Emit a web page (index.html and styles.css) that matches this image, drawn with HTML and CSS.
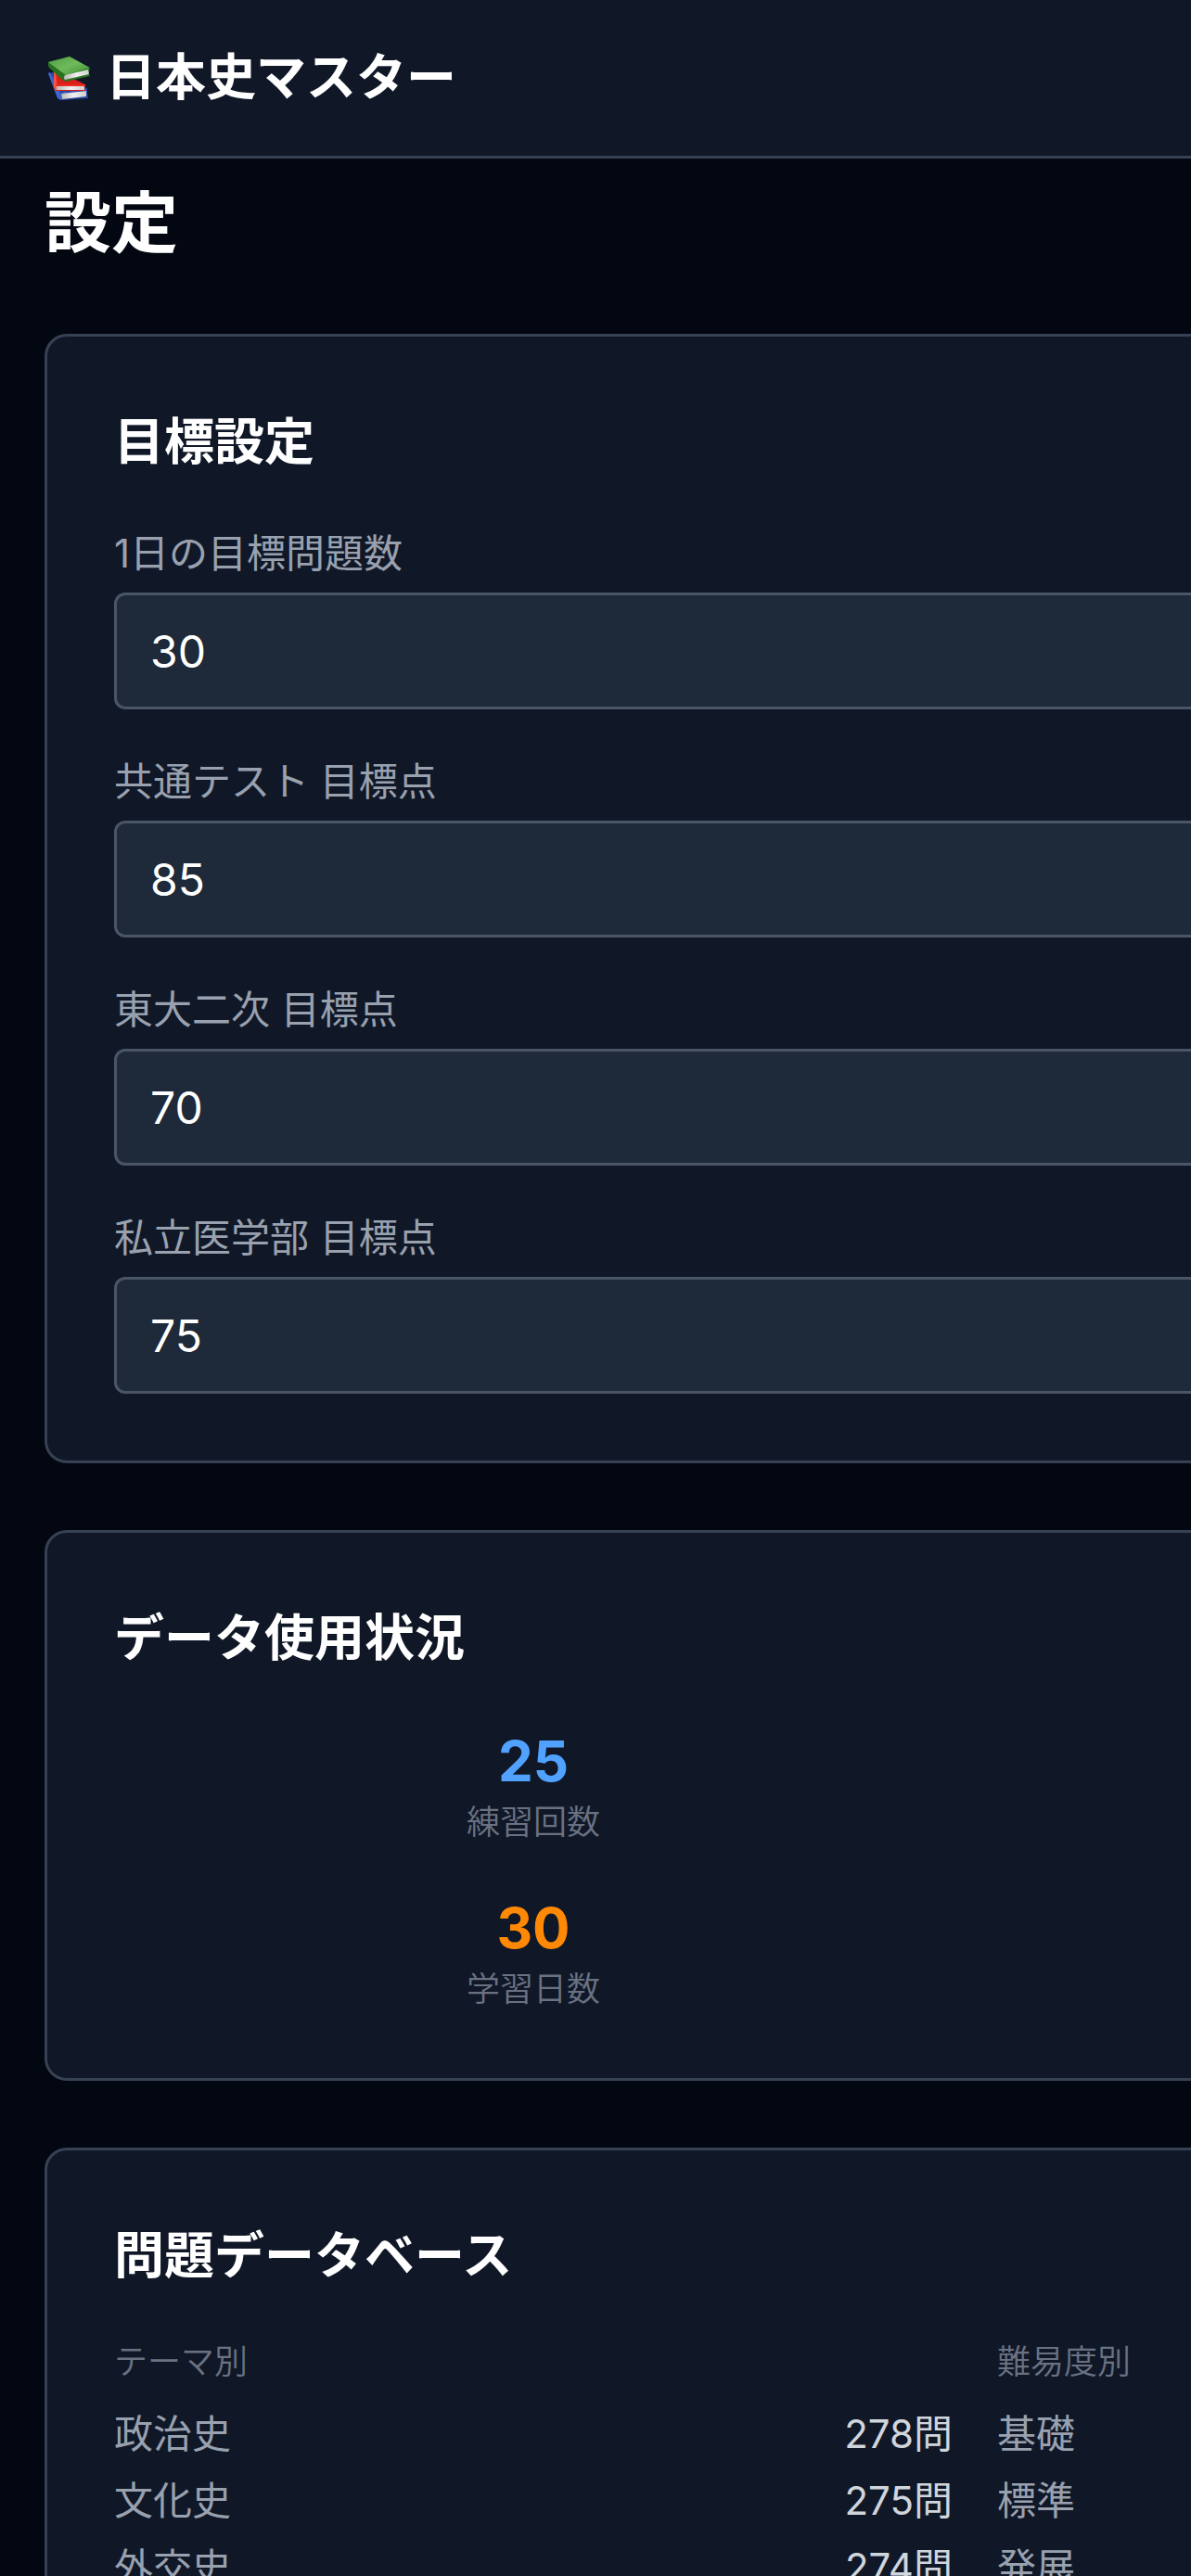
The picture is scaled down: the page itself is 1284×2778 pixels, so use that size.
FILE: index.html
```html
<!DOCTYPE html>
<html lang="ja">
<head>
<meta charset="utf-8">
<meta name="viewport" content="width=device-width, initial-scale=1">
<title>日本史マスター</title>
<link rel="stylesheet" href="styles.css">
</head>
<body>
<header class="topbar">
  <svg class="topbar-icon" viewBox="0 0 54 54" aria-hidden="true">
    <defs>
      <linearGradient id="cover-green" x1="0" y1="0" x2="1" y2="1">
        <stop offset="0" stop-color="#4f9e42"/>
        <stop offset=".5" stop-color="#70b95c"/>
        <stop offset="1" stop-color="#3d8f30"/>
      </linearGradient>
      <linearGradient id="pages" x1="0" y1="0" x2="1" y2="0">
        <stop offset="0" stop-color="#b9b9b9"/>
        <stop offset=".5" stop-color="#f0f0f0"/>
        <stop offset="1" stop-color="#cfcfcf"/>
      </linearGradient>
    </defs>
    <path d="M4 22 L9 21 L46 38 L46 41 L47 49 L18 51 L14 49 Z" fill="#2443a0"/>
    <path d="M4 22 L6 21 L19 47 L18 51 L14 49 Z" fill="#3f65c9"/>
    <path d="M18 43 L45 40 L45 47 L19 50 Z" fill="url(#pages)"/>
    <path d="M18 43 L46 39 L46 41 L18 44 Z" fill="#2d51b8"/>
    <path d="M10 20 L38 31 L45 35 L43 36 L44 41 L12 41 L10 37 Z" fill="#d91f18"/>
    <path d="M10 20 L12 21 L14 39 L12 41 L10 37 Z" fill="#f25643"/>
    <path d="M13 36 L43 35 L43 40 L13 40 Z" fill="url(#pages)"/>
    <path d="M12 34 L44 34 L44 36 L12 36 Z" fill="#ee2a20"/>
    <path d="M4 10 Q3 13 5 16 L19 29 L23 31 L49 25 L49 24 L47 23 L49 17 L27 4 Z" fill="#28721f"/>
    <path d="M4 10 L27 4 L49 16 L23 24 Z" fill="url(#cover-green)"/>
    <path d="M22 24 L47 18 L48 23 L22 29 Q20 27 22 24 Z" fill="url(#pages)"/>
  </svg>
  <span class="topbar-title">日本史マスター</span>
</header>

<main class="page">
  <h1 class="page-title">設定</h1>

  <section class="card">
    <h2 class="card-title">目標設定</h2>
    <form class="goals">
      <div class="field">
        <label class="field-label" for="daily">1日の目標問題数</label>
        <input class="field-input" id="daily" type="number" value="30">
      </div>
      <div class="field">
        <label class="field-label" for="common">共通テスト 目標点</label>
        <input class="field-input" id="common" type="number" value="85">
      </div>
      <div class="field">
        <label class="field-label" for="todai">東大二次 目標点</label>
        <input class="field-input" id="todai" type="number" value="70">
      </div>
      <div class="field">
        <label class="field-label" for="medical">私立医学部 目標点</label>
        <input class="field-input" id="medical" type="number" value="75">
      </div>
    </form>
  </section>

  <section class="card">
    <h2 class="card-title">データ使用状況</h2>
    <div class="columns columns-stats">
      <div class="stat">
        <div class="stat-value stat-blue">25</div>
        <div class="stat-label">練習回数</div>
      </div>
      <div class="stat">
        <div class="stat-value stat-orange">30</div>
        <div class="stat-label">学習日数</div>
      </div>
    </div>
  </section>

  <section class="card">
    <h2 class="card-title">問題データベース</h2>
    <div class="columns">
      <div>
        <h3 class="group-title">テーマ別</h3>
        <dl class="counts">
          <div class="count"><dt>政治史</dt><dd>278問</dd></div>
          <div class="count"><dt>文化史</dt><dd>275問</dd></div>
          <div class="count"><dt>外交史</dt><dd>274問</dd></div>
        </dl>
      </div>
      <div>
        <h3 class="group-title">難易度別</h3>
        <dl class="counts">
          <div class="count"><dt>基礎</dt></div>
          <div class="count"><dt>標準</dt></div>
          <div class="count"><dt>発展</dt></div>
        </dl>
      </div>
    </div>
  </section>
</main>
</body>
</html>
```
FILE: styles.css
```css
* {
  box-sizing: border-box;
}

body,
h1,
h2,
h3,
dl,
dd {
  margin: 0;
}

body {
  overflow-x: hidden;
  background: #030712;
  color: #fff;
  font-family: Inter, "Noto Sans CJK JP", sans-serif;
  font-size: 48px;
  line-height: 72px;
}

.topbar {
  display: flex;
  align-items: center;
  gap: 12px;
  padding: 42px 48px;
  border-bottom: 3px solid #364153;
  background: #101828;
}

.topbar-icon {
  width: 54px;
  height: 54px;
}

.topbar-title {
  font-size: 54px;
  font-weight: 700;
  line-height: 84px;
}

/* The two-column grids keep a minimum column width, so the cards
   can run past the right edge on narrow windows. */
.page {
  display: flex;
  flex-direction: column;
  gap: 72px;
  width: max-content;
  min-width: 100%;
  padding: 21px 48px 72px;
}

.page-title {
  font-size: 72px;
  font-weight: 700;
  line-height: 96px;
}

.card {
  padding: 72px;
  border: 3px solid #364153;
  border-radius: 24px;
  background: #101828;
}

.card-title {
  margin-bottom: 48px;
  font-size: 54px;
  font-weight: 700;
  line-height: 84px;
}

.goals {
  display: flex;
  flex-direction: column;
  gap: 48px;
}

.field {
  display: flex;
  flex-direction: column;
  gap: 12px;
}

.field-label {
  color: #99a1af;
  font-size: 42px;
  line-height: 60px;
}

.field-input {
  width: 100%;
  height: 126px;
  padding: 24px 36px;
  border: 3px solid #4a5565;
  border-radius: 12px;
  background: #1e2939;
  color: #fff;
  font: inherit;
  appearance: textfield;
}

.field-input::-webkit-inner-spin-button {
  display: none;
}

.columns {
  display: grid;
  grid-template-columns: repeat(2, minmax(904px, 1fr));
  gap: 48px;
}

.columns-stats .stat {
  grid-column: 1;
}

.stat {
  text-align: center;
}

.stat-value {
  font-size: 60px;
  font-weight: 700;
  line-height: 84px;
}

.stat-blue {
  color: #51a2ff;
}

.stat-orange {
  color: #ff8904;
}

.stat-label,
.group-title {
  color: #6a7282;
  font-size: 36px;
  font-weight: 350;
  line-height: 48px;
}

.group-title {
  margin-bottom: 24px;
}

.counts {
  display: flex;
  flex-direction: column;
  gap: 12px;
}

.count {
  display: flex;
  justify-content: space-between;
  color: #99a1af;
  font-size: 42px;
  line-height: 60px;
}

.count dd {
  color: #d1d5dc;
}
```
